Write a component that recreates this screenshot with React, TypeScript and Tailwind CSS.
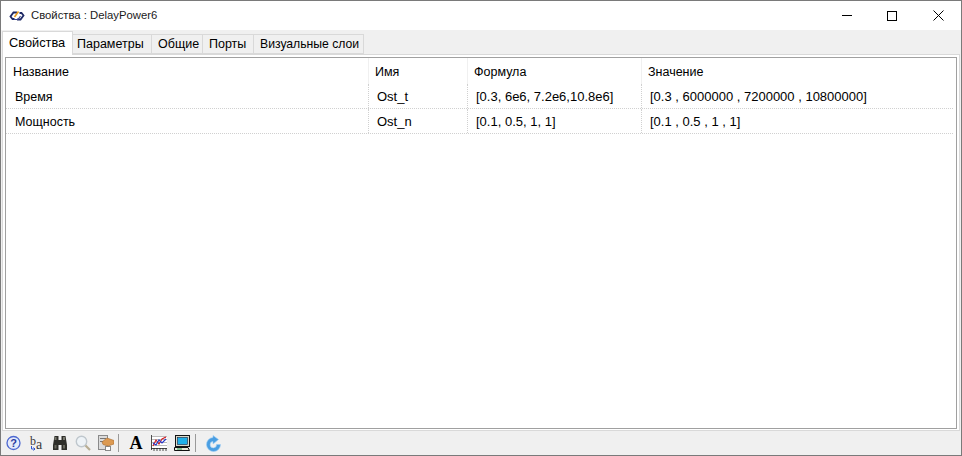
const font = "font-['Liberation_Sans',sans-serif]";

const rows = [
  { name: "Время", id: "Ost_t", formula: "[0.3, 6e6, 7.2e6,10.8e6]", value: "[0.3 , 6000000 , 7200000 , 10800000]" },
  { name: "Мощность", id: "Ost_n", formula: "[0.1, 0.5, 1, 1]", value: "[0.1 , 0.5 , 1 , 1]" },
];

const tabs = [
  { label: "Параметры", width: "w-[79px]", pad: "pl-[4px]" },
  { label: "Общие", width: "w-[51px]", pad: "pl-[6px]" },
  { label: "Порты", width: "w-[51px]", pad: "pl-[6px]" },
  { label: "Визуальные слои", width: "w-[110px] text-[12.2px]", pad: "pl-[6px]" },
];

function AppLogo() {
  return (
    <svg width="16" height="12" viewBox="0 0 16 12" fill="none">
      <path d="M8 2.5 H4.5 L1.5 6.5 L3.5 9 H5.5" stroke="#1f2a66" strokeWidth="1.8" />
      <path d="M8 9.5 H11.5 L14.5 5.5 L12.5 3 H10.5" stroke="#1f2a66" strokeWidth="1.8" />
      <path d="M5 9.5 L9 9.5 L11.5 6" stroke="#3a4590" strokeWidth="1.2" />
      <path d="M5.5 7 L9.5 1.5" stroke="#e79a1c" strokeWidth="1.6" />
    </svg>
  );
}

function ToolIcons() {
  return (
    <div className="flex items-center h-full pl-[5px]">
      {/* help */}
      <svg width="16" height="16" viewBox="0 0 16 16" className="mr-[7px]">
        <circle cx="7.5" cy="8" r="6.5" fill="#e4eafb" stroke="#4d68d0" strokeWidth="1.3" />
        <text x="7.5" y="12" textAnchor="middle" fontSize="11" fontWeight="700" fill="#2a3aa0" fontFamily="Liberation Sans">?</text>
      </svg>
      {/* b to a */}
      <svg width="16" height="18" viewBox="0 0 16 18" className="mr-[7px]">
        <text x="1" y="11" fontSize="12" fill="#3a3a3a" fontFamily="Liberation Serif">b</text>
        <text x="7" y="15" fontSize="14" fill="#3a3a3a" fontFamily="Liberation Serif">a</text>
        <path d="M2.5 12 V15 H6 M4.5 13.5 L6 15 L4.5 16.5" stroke="#2f55d0" fill="none" />
      </svg>
      {/* binoculars */}
      <svg width="16" height="16" viewBox="0 0 16 16" className="mr-[7px]">
        <path d="M2.5 1 H6.5 V5 H9.5 V1 H13.5 L15 10 V15 H9.5 V10 H6.5 V15 H1 V10 Z" fill="#2e2e2a" />
        <rect x="2.5" y="2" width="2" height="3" fill="#77776c" />
        <rect x="11" y="2" width="2" height="3" fill="#77776c" />
        <rect x="2.5" y="10" width="2" height="3.5" fill="#66665c" />
        <rect x="11" y="10" width="2" height="3.5" fill="#66665c" />
      </svg>
      {/* magnifier, disabled */}
      <svg width="16" height="16" viewBox="0 0 16 16" className="mr-[7px]">
        <circle cx="6.5" cy="6.5" r="5.2" fill="#eef3f7" stroke="#bfc7cd" strokeWidth="1.4" />
        <path d="M10.5 10.5 L15 15" stroke="#b8ad94" strokeWidth="2.2" />
      </svg>
      {/* document with hand */}
      <svg width="16" height="16" viewBox="0 0 16 16" className="mr-[4px]">
        <rect x="0.5" y="0.5" width="9" height="14" fill="#dcdcdc" stroke="#8a8a8a" />
        <path d="M2 3.5 H8 M2 6.5 H8" stroke="#777" />
        <rect x="7.5" y="11.5" width="5" height="4" fill="#fff" stroke="#888" />
        <path d="M4 7 L9 3 L16 5.5 V9 L10 11 L5 9.5 Z" fill="#dc9a52" stroke="#a86a2c" strokeWidth="0.6" />
      </svg>
      <div className="w-px h-[18px] bg-[#9a9a9a] mr-[9px]" />
      {/* font */}
      <div className="w-[16px] mr-[7px] flex justify-center">
        <span className="font-['Liberation_Serif',serif] font-bold text-[18px] leading-none text-black">A</span>
      </div>
      {/* chart */}
      <svg width="16" height="16" viewBox="0 0 16 16" className="mr-[7px]">
        <rect x="1" y="1" width="15" height="12" fill="#fff" />
        <path d="M1 1.5 H16 M1 4.5 H16 M1 7.5 H16 M1 10.5 H16" stroke="#8d8d8d" strokeWidth="0.6" />
        <path d="M0.5 0 V15 M0 13.5 H16 M3 13 V16 M6 13 V16 M9 13 V16 M12 13 V16 M15 13 V16" stroke="#222" strokeWidth="0.8" />
        <path d="M2 11 L5 5 L8 9 L11 4 L15 2" stroke="#d0181f" fill="none" strokeWidth="1.1" />
        <path d="M2 8 L5 10 L8 5 L11 8 L15 4" stroke="#2438c8" fill="none" strokeWidth="1.1" />
      </svg>
      {/* monitor */}
      <svg width="16" height="16" viewBox="0 0 16 16" className="mr-[5px]">
        <rect x="1.5" y="0.5" width="14" height="11" fill="#d8d8c8" stroke="#111" />
        <rect x="3.5" y="2.5" width="10" height="7" fill="#1fb0e8" stroke="#124" strokeWidth="0.6" />
        <path d="M0.5 12.5 H14 L15.5 15.5 H0.5 Z" fill="#e8e8d8" stroke="#111" />
        <rect x="3" y="13.5" width="5" height="1" fill="#2a9a55" />
      </svg>
      <div className="w-px h-[18px] bg-[#9a9a9a] mr-[9px]" />
      {/* refresh */}
      <svg width="17" height="17" viewBox="0 0 17 17">
        <path d="M8 2.5 A7 7 0 1 0 15.5 9.5 H11.5 A3.2 3.2 0 1 1 8 6.5 V9 L13.5 4.5 L8 0.5 Z" fill="#4a9ee2" stroke="#9accf5" strokeWidth="0.6" />
      </svg>
    </div>
  );
}

export default function App() {
  return (
    <div className={`${font} w-[962px] h-[456px] flex flex-col border border-[#7a7a7a] bg-[#f0f0f0] text-[12.5px] text-black overflow-hidden`}>
      {/* Title bar */}
      <div className="h-[29px] shrink-0 bg-white flex items-center">
        <div className="ml-[8px] mr-[6px] flex"><AppLogo /></div>
        <span className="text-[#1a1a1a] text-[11.3px]">Свойства : DelayPower6</span>
        <div className="ml-auto flex items-center text-black">
          <div className="w-[10px] h-px bg-black mr-[35px]" />
          <div className="w-[10px] h-[10px] border border-black mr-[36px]" />
          <svg width="11" height="11" viewBox="0 0 11 11" className="mr-[17px]">
            <path d="M0.5 0.5 L10.5 10.5 M10.5 0.5 L0.5 10.5" stroke="#000" strokeWidth="1" />
          </svg>
        </div>
      </div>

      {/* Tabs */}
      <div className="h-[24px] shrink-0 flex items-start pl-[1px] pt-[1px]">
        <div className="w-[71px] h-[24px] bg-white border border-b-0 border-[#d9d9d9] flex items-center pl-[6px] pb-[2px] relative z-10 text-[12.8px]">
          Свойства
        </div>
        {tabs.map((t) => (
          <div key={t.label} className={`${t.width} ${t.pad} h-[20px] mt-[3px] bg-[#f0f0f0] border border-l-0 border-[#d9d9d9] flex items-center pt-[1px]`}>
            {t.label}
          </div>
        ))}
      </div>

      {/* Pane */}
      <div className="flex-1 min-h-0 flex flex-col bg-white border border-[#d9d9d9] mx-[1px]">
        <div className="flex-1 min-h-0 mx-[2px] mt-[2px] mb-[1px] border border-[#a0a0a0] bg-white">
          <div className="flex h-[26px] items-center">
            <div className="w-[363px] h-full pl-[7px] pt-[2px] flex items-center border-r border-[#f0f0f0]">Название</div>
            <div className="w-[99px] h-full pl-[6px] pt-[2px] flex items-center border-r border-[#f0f0f0]">Имя</div>
            <div className="w-[174px] h-full pl-[6px] pt-[2px] flex items-center border-r border-[#f0f0f0]">Формула</div>
            <div className="flex-1 h-full pl-[6px] pt-[2px] flex items-center">Значение</div>
          </div>
          {rows.map((r) => (
            <div key={r.id} className="flex h-[25px] items-center border-b border-dotted border-[#d0d0d0] mr-[3px] text-[13px]">
              <div className="w-[363px] h-full pl-[9px] pt-[2px] flex items-center border-r border-dotted border-[#d0d0d0] text-[12.5px]">{r.name}</div>
              <div className="w-[99px] h-full pl-[8px] pt-[2px] flex items-center border-r border-dotted border-[#d0d0d0]">{r.id}</div>
              <div className="w-[174px] h-full pl-[8px] pt-[2px] flex items-center border-r border-dotted border-[#d0d0d0]">{r.formula}</div>
              <div className="flex-1 h-full pl-[8px] pt-[2px] flex items-center">{r.value}</div>
            </div>
          ))}
        </div>
      </div>

      {/* Toolbar */}
      <div className="h-[24px] shrink-0 bg-[#f0f0f0]">
        <ToolIcons />
      </div>
    </div>
  );
}
